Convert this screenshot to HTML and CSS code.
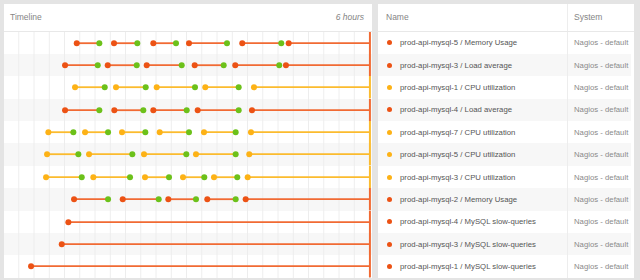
FILE: index.html
```html
<!DOCTYPE html>
<html>
<head>
<meta charset="utf-8">
<link rel="stylesheet" href="styles.css">
</head>
<body>
<div class="wrap">
  <section class="panel timeline">
    <div class="thead"><span>Timeline</span><span class="range">6 hours</span></div>
    <div class="trows">
      <div class="trow">
        <svg class="chart" viewBox="0 0 368 22.4" width="368" height="22.4">
          <g class="ln-r"><line x1="72.7" y1="11.2" x2="95.3" y2="11.2"/><line x1="110" y1="11.2" x2="133.3" y2="11.2"/><line x1="149.3" y1="11.2" x2="172" y2="11.2"/><line x1="185" y1="11.2" x2="223" y2="11.2"/><line x1="238.3" y1="11.2" x2="277.3" y2="11.2"/><line x1="284.7" y1="11.2" x2="366" y2="11.2"/><line class="now" x1="366" y1="0" x2="366" y2="22.4"/></g>
          <g class="dot-r"><circle cx="72.7" cy="11.2" r="3"/><circle cx="110" cy="11.2" r="3"/><circle cx="149.3" cy="11.2" r="3"/><circle cx="185" cy="11.2" r="3"/><circle cx="238.3" cy="11.2" r="3"/><circle cx="284.7" cy="11.2" r="3"/></g>
          <g class="dot-g"><circle cx="95.3" cy="11.2" r="3"/><circle cx="133.3" cy="11.2" r="3"/><circle cx="172" cy="11.2" r="3"/><circle cx="223" cy="11.2" r="3"/><circle cx="277.3" cy="11.2" r="3"/></g>
        </svg>
      </div>
      <div class="trow">
        <svg class="chart" viewBox="0 0 368 22.4" width="368" height="22.4">
          <g class="ln-r"><line x1="61" y1="11.2" x2="93.7" y2="11.2"/><line x1="103.7" y1="11.2" x2="132.7" y2="11.2"/><line x1="142.7" y1="11.2" x2="177.7" y2="11.2"/><line x1="190.7" y1="11.2" x2="219.7" y2="11.2"/><line x1="231.3" y1="11.2" x2="275.3" y2="11.2"/><line x1="282" y1="11.2" x2="366" y2="11.2"/><line class="now" x1="366" y1="0" x2="366" y2="22.4"/></g>
          <g class="dot-r"><circle cx="61" cy="11.2" r="3"/><circle cx="103.7" cy="11.2" r="3"/><circle cx="142.7" cy="11.2" r="3"/><circle cx="190.7" cy="11.2" r="3"/><circle cx="231.3" cy="11.2" r="3"/><circle cx="282" cy="11.2" r="3"/></g>
          <g class="dot-g"><circle cx="93.7" cy="11.2" r="3"/><circle cx="132.7" cy="11.2" r="3"/><circle cx="177.7" cy="11.2" r="3"/><circle cx="219.7" cy="11.2" r="3"/><circle cx="275.3" cy="11.2" r="3"/></g>
        </svg>
      </div>
      <div class="trow">
        <svg class="chart" viewBox="0 0 368 22.4" width="368" height="22.4">
          <g class="ln-y"><line x1="71" y1="11.2" x2="100.7" y2="11.2"/><line x1="112" y1="11.2" x2="141.7" y2="11.2"/><line x1="152.7" y1="11.2" x2="191" y2="11.2"/><line x1="201.3" y1="11.2" x2="234.7" y2="11.2"/><line x1="250" y1="11.2" x2="366" y2="11.2"/><line class="now" x1="366" y1="0" x2="366" y2="22.4"/></g>
          <g class="dot-y"><circle cx="71" cy="11.2" r="3"/><circle cx="112" cy="11.2" r="3"/><circle cx="152.7" cy="11.2" r="3"/><circle cx="201.3" cy="11.2" r="3"/><circle cx="250" cy="11.2" r="3"/></g>
          <g class="dot-g"><circle cx="100.7" cy="11.2" r="3"/><circle cx="141.7" cy="11.2" r="3"/><circle cx="191" cy="11.2" r="3"/><circle cx="234.7" cy="11.2" r="3"/></g>
        </svg>
      </div>
      <div class="trow">
        <svg class="chart" viewBox="0 0 368 22.4" width="368" height="22.4">
          <g class="ln-r"><line x1="61" y1="11.2" x2="95.3" y2="11.2"/><line x1="110.3" y1="11.2" x2="139.3" y2="11.2"/><line x1="149.3" y1="11.2" x2="182.7" y2="11.2"/><line x1="193.7" y1="11.2" x2="234.7" y2="11.2"/><line x1="248" y1="11.2" x2="366" y2="11.2"/><line class="now" x1="366" y1="0" x2="366" y2="22.4"/></g>
          <g class="dot-r"><circle cx="61" cy="11.2" r="3"/><circle cx="110.3" cy="11.2" r="3"/><circle cx="149.3" cy="11.2" r="3"/><circle cx="193.7" cy="11.2" r="3"/><circle cx="248" cy="11.2" r="3"/></g>
          <g class="dot-g"><circle cx="95.3" cy="11.2" r="3"/><circle cx="139.3" cy="11.2" r="3"/><circle cx="182.7" cy="11.2" r="3"/><circle cx="234.7" cy="11.2" r="3"/></g>
        </svg>
      </div>
      <div class="trow">
        <svg class="chart" viewBox="0 0 368 22.4" width="368" height="22.4">
          <g class="ln-y"><line x1="44.3" y1="11.2" x2="69.3" y2="11.2"/><line x1="81" y1="11.2" x2="104" y2="11.2"/><line x1="118" y1="11.2" x2="141.3" y2="11.2"/><line x1="155.7" y1="11.2" x2="185" y2="11.2"/><line x1="200" y1="11.2" x2="231.7" y2="11.2"/><line x1="247" y1="11.2" x2="366" y2="11.2"/><line class="now" x1="366" y1="0" x2="366" y2="22.4"/></g>
          <g class="dot-y"><circle cx="44.3" cy="11.2" r="3"/><circle cx="81" cy="11.2" r="3"/><circle cx="118" cy="11.2" r="3"/><circle cx="155.7" cy="11.2" r="3"/><circle cx="200" cy="11.2" r="3"/><circle cx="247" cy="11.2" r="3"/></g>
          <g class="dot-g"><circle cx="69.3" cy="11.2" r="3"/><circle cx="104" cy="11.2" r="3"/><circle cx="141.3" cy="11.2" r="3"/><circle cx="185" cy="11.2" r="3"/><circle cx="231.7" cy="11.2" r="3"/></g>
        </svg>
      </div>
      <div class="trow">
        <svg class="chart" viewBox="0 0 368 22.4" width="368" height="22.4">
          <g class="ln-y"><line x1="43" y1="11.2" x2="74.3" y2="11.2"/><line x1="85" y1="11.2" x2="128.3" y2="11.2"/><line x1="140" y1="11.2" x2="182.3" y2="11.2"/><line x1="192" y1="11.2" x2="231.7" y2="11.2"/><line x1="245.3" y1="11.2" x2="366" y2="11.2"/><line class="now" x1="366" y1="0" x2="366" y2="22.4"/></g>
          <g class="dot-y"><circle cx="43" cy="11.2" r="3"/><circle cx="85" cy="11.2" r="3"/><circle cx="140" cy="11.2" r="3"/><circle cx="192" cy="11.2" r="3"/><circle cx="245.3" cy="11.2" r="3"/></g>
          <g class="dot-g"><circle cx="74.3" cy="11.2" r="3"/><circle cx="128.3" cy="11.2" r="3"/><circle cx="182.3" cy="11.2" r="3"/><circle cx="231.7" cy="11.2" r="3"/></g>
        </svg>
      </div>
      <div class="trow">
        <svg class="chart" viewBox="0 0 368 22.4" width="368" height="22.4">
          <g class="ln-y"><line x1="42" y1="11.2" x2="77.7" y2="11.2"/><line x1="89.3" y1="11.2" x2="126" y2="11.2"/><line x1="141" y1="11.2" x2="165" y2="11.2"/><line x1="179" y1="11.2" x2="200.3" y2="11.2"/><line x1="210" y1="11.2" x2="233.3" y2="11.2"/><line x1="243.7" y1="11.2" x2="366" y2="11.2"/><line class="now" x1="366" y1="0" x2="366" y2="22.4"/></g>
          <g class="dot-y"><circle cx="42" cy="11.2" r="3"/><circle cx="89.3" cy="11.2" r="3"/><circle cx="141" cy="11.2" r="3"/><circle cx="179" cy="11.2" r="3"/><circle cx="210" cy="11.2" r="3"/><circle cx="243.7" cy="11.2" r="3"/></g>
          <g class="dot-g"><circle cx="77.7" cy="11.2" r="3"/><circle cx="126" cy="11.2" r="3"/><circle cx="165" cy="11.2" r="3"/><circle cx="200.3" cy="11.2" r="3"/><circle cx="233.3" cy="11.2" r="3"/></g>
        </svg>
      </div>
      <div class="trow">
        <svg class="chart" viewBox="0 0 368 22.4" width="368" height="22.4">
          <g class="ln-r"><line x1="70" y1="11.2" x2="104" y2="11.2"/><line x1="118.7" y1="11.2" x2="154.7" y2="11.2"/><line x1="164.3" y1="11.2" x2="192" y2="11.2"/><line x1="203.3" y1="11.2" x2="231.7" y2="11.2"/><line x1="241.7" y1="11.2" x2="366" y2="11.2"/><line class="now" x1="366" y1="0" x2="366" y2="22.4"/></g>
          <g class="dot-r"><circle cx="70" cy="11.2" r="3"/><circle cx="118.7" cy="11.2" r="3"/><circle cx="164.3" cy="11.2" r="3"/><circle cx="203.3" cy="11.2" r="3"/><circle cx="241.7" cy="11.2" r="3"/></g>
          <g class="dot-g"><circle cx="104" cy="11.2" r="3"/><circle cx="154.7" cy="11.2" r="3"/><circle cx="192" cy="11.2" r="3"/><circle cx="231.7" cy="11.2" r="3"/></g>
        </svg>
      </div>
      <div class="trow">
        <svg class="chart" viewBox="0 0 368 22.4" width="368" height="22.4">
          <g class="ln-r"><line x1="64.3" y1="11.2" x2="366" y2="11.2"/><line class="now" x1="366" y1="0" x2="366" y2="22.4"/></g>
          <g class="dot-r"><circle cx="64.3" cy="11.2" r="3"/></g>
        </svg>
      </div>
      <div class="trow">
        <svg class="chart" viewBox="0 0 368 22.4" width="368" height="22.4">
          <g class="ln-r"><line x1="57.7" y1="11.2" x2="366" y2="11.2"/><line class="now" x1="366" y1="0" x2="366" y2="22.4"/></g>
          <g class="dot-r"><circle cx="57.7" cy="11.2" r="3"/></g>
        </svg>
      </div>
      <div class="trow">
        <svg class="chart" viewBox="0 0 368 22.4" width="368" height="22.4">
          <g class="ln-r"><line x1="27" y1="11.2" x2="366" y2="11.2"/><line class="now" x1="366" y1="0" x2="366" y2="22.4"/></g>
          <g class="dot-r"><circle cx="27" cy="11.2" r="3"/></g>
        </svg>
      </div>
    </div>
  </section>
  <section class="panel list">
    <div class="lhead"><div class="cname">Name</div><div class="csys">System</div></div>
    <div class="lrows">
      <div class="lrow"><div class="cname"><i class="sd red"></i>prod-api-mysql-5 / Memory Usage</div><div class="csys">Nagios - default</div></div>
      <div class="lrow"><div class="cname"><i class="sd red"></i>prod-api-mysql-3 / Load average</div><div class="csys">Nagios - default</div></div>
      <div class="lrow"><div class="cname"><i class="sd yel"></i>prod-api-mysql-1 / CPU utilization</div><div class="csys">Nagios - default</div></div>
      <div class="lrow"><div class="cname"><i class="sd red"></i>prod-api-mysql-4 / Load average</div><div class="csys">Nagios - default</div></div>
      <div class="lrow"><div class="cname"><i class="sd yel"></i>prod-api-mysql-7 / CPU utilization</div><div class="csys">Nagios - default</div></div>
      <div class="lrow"><div class="cname"><i class="sd yel"></i>prod-api-mysql-5 / CPU utilization</div><div class="csys">Nagios - default</div></div>
      <div class="lrow"><div class="cname"><i class="sd yel"></i>prod-api-mysql-3 / CPU utilization</div><div class="csys">Nagios - default</div></div>
      <div class="lrow"><div class="cname"><i class="sd red"></i>prod-api-mysql-2 / Memory Usage</div><div class="csys">Nagios - default</div></div>
      <div class="lrow"><div class="cname"><i class="sd red"></i>prod-api-mysql-4 / MySQL slow-queries</div><div class="csys">Nagios - default</div></div>
      <div class="lrow"><div class="cname"><i class="sd red"></i>prod-api-mysql-3 / MySQL slow-queries</div><div class="csys">Nagios - default</div></div>
      <div class="lrow"><div class="cname"><i class="sd red"></i>prod-api-mysql-1 / MySQL slow-queries</div><div class="csys">Nagios - default</div></div>
    </div>
  </section>
</div>
</body>
</html>
```
FILE: styles.css
```css
html, body {
  margin: 0;
  padding: 0;
  background: #e4e4e4;
  height: 280px;
  overflow: hidden;
  font-family: "Liberation Sans", Arial, sans-serif;
}
.wrap {
  display: flex;
  gap: 6px;
  padding: 4px 6px 0 4px;
  height: 274px;
}
.panel {
  background: #fff;
  height: 274px;
  overflow: hidden;
}
.timeline {
  width: 368px;
  flex: none;
}
.list {
  flex: 1;
  min-width: 0;
}
.thead, .lhead {
  height: 26.5px;
  border-bottom: 1px solid #e8e8e8;
  display: flex;
  align-items: center;
  font-size: 8.5px;
  color: #858585;
}
.thead {
  justify-content: space-between;
  padding: 0 8px 0 6px;
}
.range {
  font-style: italic;
}
.trow {
  height: 22.4px;
  background: repeating-linear-gradient(to right, transparent 0, transparent 14.75px, #ededed 14.75px, #ededed 15.75px), #fff;
  background-size: 15.25px 100%;
  background-repeat: repeat-x;
}
.trow:nth-child(even) {
  background-color: #f7f7f7;
}
.chart {
  display: block;
}
.chart line {
  stroke-width: 1.8;
}
.chart line.now {
  stroke-width: 2;
}
.ln-r line { stroke: #f16a33; }
.ln-y line { stroke: #fbbb2e; }
.dot-r circle { fill: #ec5214; }
.dot-y circle { fill: #fdb216; }
.dot-g circle { fill: #6cc11a; }

.lrows {
  padding-right: 3px;
}
.lhead .cname, .lrow .cname {
  width: 190px;
  flex: none;
  box-sizing: border-box;
  border-right: 1px solid #ededed;
  height: 100%;
  display: flex;
  align-items: center;
}
.lhead .cname {
  padding-left: 8px;
}
.csys {
  padding-left: 6px;
  white-space: nowrap;
}
.lrow {
  height: 22.4px;
  display: flex;
  align-items: center;
  font-size: 7.75px;
  background: #fff;
}
.lrow:nth-child(even) {
  background: #f7f7f7;
}
.lrow .cname {
  padding-left: 8.5px;
  color: #555;
  white-space: nowrap;
}
.lrow .csys {
  color: #8a8a8a;
}
.sd {
  width: 5px;
  height: 5px;
  border-radius: 50%;
  margin-right: 8.5px;
  flex: none;
}
.sd.red { background: #ec5214; }
.sd.yel { background: #fdb216; }
```
